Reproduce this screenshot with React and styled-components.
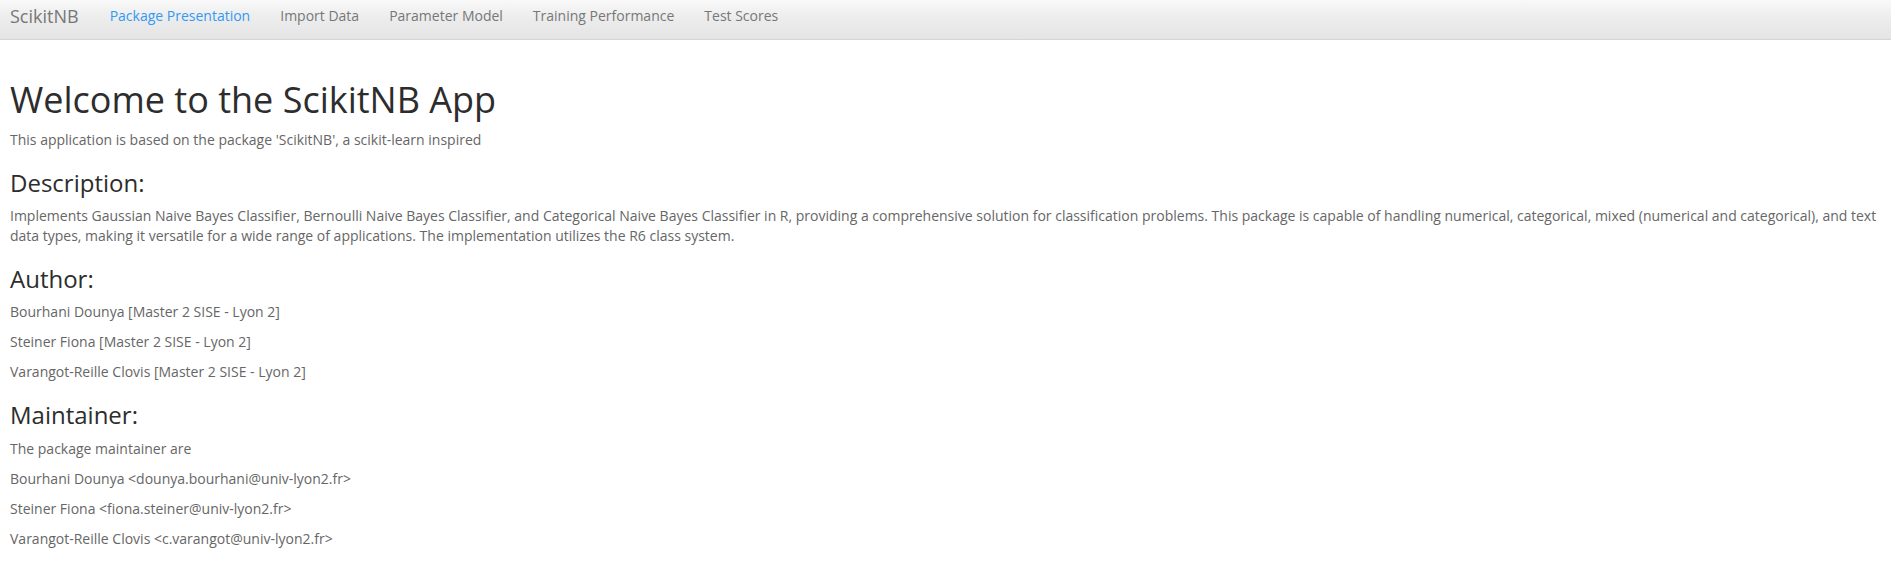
import styled, { createGlobalStyle } from 'styled-components'

const GlobalStyle = createGlobalStyle`
    html, body {
        margin: 0;
        padding: 0;
        background: #fff;
    }

    body {
        font-family: "Open Sans", "Liberation Sans", Arial, sans-serif;
        font-size: 14px;
        line-height: 20px;
        color: #666666;
    }
`;

const Navbar = styled.nav`
    display: flex;
    align-items: flex-start;
    height: 39px;
    padding-left: 10px;
    background-image: linear-gradient(#f9f9f9, #eeeeee 38%, #e4e4e4);
    border-bottom: 1px solid #d5d5d5;
`;

const Brand = styled.span`
    padding: 6px 16px 0 0;
    font-size: 18px;
    line-height: 20px;
    color: #777777;
`;

const NavList = styled.ul`
    display: flex;
    margin: 0;
    padding: 0;
    list-style: none;
`;

const NavLink = styled.li`
    padding: 6px 15px 0;
    font-size: 14px;
    line-height: 20px;
    color: ${props => (props.$active ? '#3399f3' : '#777777')};
    cursor: pointer;
`;

const Content = styled.main`
    padding: 20px 4px 0 10px;
`;

const Title = styled.h1`
    margin: 20px 0 10px;
    font-size: 36px;
    font-weight: 400;
    line-height: 1.1;
    color: #2d2d2d;
`;

const Heading = styled.h3`
    margin: 20px 0 10px;
    font-size: 24px;
    font-weight: 400;
    line-height: 1.1;
    color: #2d2d2d;
`;

const Text = styled.p`
    margin: 0 0 10px;
`;

const tabs = [
    'Package Presentation',
    'Import Data',
    'Parameter Model',
    'Training Performance',
    'Test Scores',
];

const authors = [
    'Bourhani Dounya [Master 2 SISE - Lyon 2]',
    'Steiner Fiona [Master 2 SISE - Lyon 2]',
    'Varangot-Reille Clovis [Master 2 SISE - Lyon 2]',
];

const maintainers = [
    'The package maintainer are',
    'Bourhani Dounya <dounya.bourhani@univ-lyon2.fr>',
    'Steiner Fiona <fiona.steiner@univ-lyon2.fr>',
    'Varangot-Reille Clovis <c.varangot@univ-lyon2.fr>',
];

const App = () => {
    return (
        <>
            <GlobalStyle />
            <Navbar>
                <Brand>ScikitNB</Brand>
                <NavList>
                    {tabs.map((tab, i) => (
                        <NavLink key={tab} $active={i === 0}>{tab}</NavLink>
                    ))}
                </NavList>
            </Navbar>
            <Content>
                <Title>Welcome to the ScikitNB App</Title>
                <Text>This application is based on the package 'ScikitNB', a scikit-learn inspired</Text>

                <Heading>Description:</Heading>
                <Text>
                    Implements Gaussian Naive Bayes Classifier, Bernoulli Naive Bayes Classifier, and Categorical Naive Bayes Classifier in R, providing a comprehensive solution for classification problems. This package is capable of handling numerical, categorical, mixed (numerical and categorical), and text data types, making it versatile for a wide range of applications. The implementation utilizes the R6 class system.
                </Text>

                <Heading>Author:</Heading>
                {authors.map(a => <Text key={a}>{a}</Text>)}

                <Heading>Maintainer:</Heading>
                {maintainers.map(m => <Text key={m}>{m}</Text>)}
            </Content>
        </>
    );
};

export default App;
